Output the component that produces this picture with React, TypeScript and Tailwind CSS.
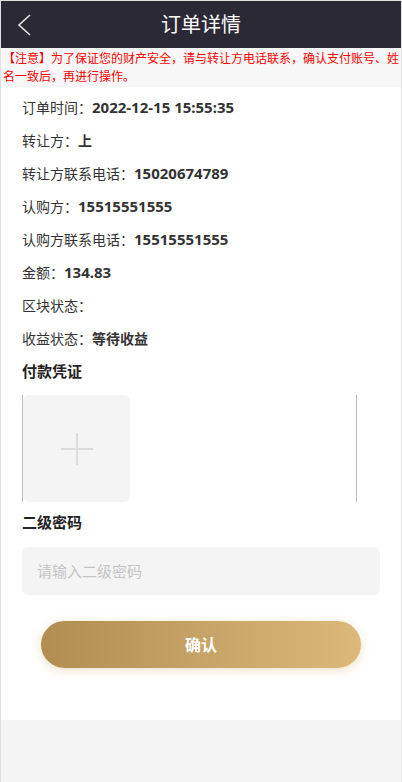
const rows: { label: string; value: string; num?: boolean }[] = [
  { label: '订单时间：', value: '2022-12-15 15:55:35', num: true },
  { label: '转让方：', value: '上' },
  { label: '转让方联系电话：', value: '15020674789', num: true },
  { label: '认购方：', value: '15515551555', num: true },
  { label: '认购方联系电话：', value: '15515551555', num: true },
  { label: '金额：', value: '134.83', num: true },
  { label: '区块状态：', value: '' },
  { label: '收益状态：', value: '等待收益' },
]

export default function App() {
  return (
    <div
      className="h-[782px] w-[402px] bg-[#f4f4f4] border-x border-t border-[#e2e2e2] flex flex-col"
      style={{ fontFamily: '"Noto Sans", "Noto Sans CJK SC", sans-serif' }}
    >
      {/* header */}
      <header className="h-[47px] shrink-0 bg-[#2a2935] relative flex items-center justify-center">
        <svg className="absolute left-[16px] top-[12px]" width="16" height="24" viewBox="0 0 16 24">
          <polyline points="13,2 2,12 13,22" fill="none" stroke="#e6e6e6" strokeWidth="1.6" />
        </svg>
        <h1 className="text-white text-[20px] leading-none">订单详情</h1>
      </header>

      {/* notice */}
      <div className="h-[39px] shrink-0 bg-[#f7f7f7] px-[2px] pt-[2px] text-[12px] leading-[18px] text-[#ff0000]">
        【注意】为了保证您的财产安全，请与转让方电话联系，确认支付账号、姓名一致后，再进行操作。
      </div>

      {/* content */}
      <main className="h-[633px] shrink-0 bg-white px-[21px] pt-[4px]">
        {rows.map((r) => (
          <div key={r.label} className="h-[33px] flex items-center text-[14px] text-[#333]">
            <span>{r.label}</span>
            <span className={r.num ? 'font-bold text-[15px]' : 'font-bold'}>{r.value}</span>
          </div>
        ))}

        <div className="h-[33px] flex items-center text-[15px] font-bold text-[#222]">付款凭证</div>

        <div className="mt-[7px] w-[335px] h-[107px] border-x border-[#bdbdbd]">
          <div className="w-[107px] h-[107px] bg-[#f4f4f4] rounded-[6px] flex items-center justify-center">
            <svg width="32" height="32" viewBox="0 0 32 32">
              <path d="M16 0v32M0 16h32" stroke="#dcdcdc" strokeWidth="2" fill="none" />
            </svg>
          </div>
        </div>

        <div className="h-[33px] mt-[4px] flex items-center text-[15px] font-bold text-[#222]">二级密码</div>

        <input
          type="password"
          placeholder="请输入二级密码"
          className="mt-[8px] w-[358px] h-[48px] rounded-[6px] bg-[#f4f4f4] px-[15px] text-[15px] outline-none placeholder:text-[#c4c4c4]"
        />

        <button className="mt-[26px] mx-auto block w-[320px] h-[47px] rounded-full bg-gradient-to-r from-[#b18d52] to-[#dcb97b] text-white text-[16px] font-bold shadow-[0_2px_10px_rgba(220,185,123,0.45)]">
          确认
        </button>
      </main>
    </div>
  )
}
